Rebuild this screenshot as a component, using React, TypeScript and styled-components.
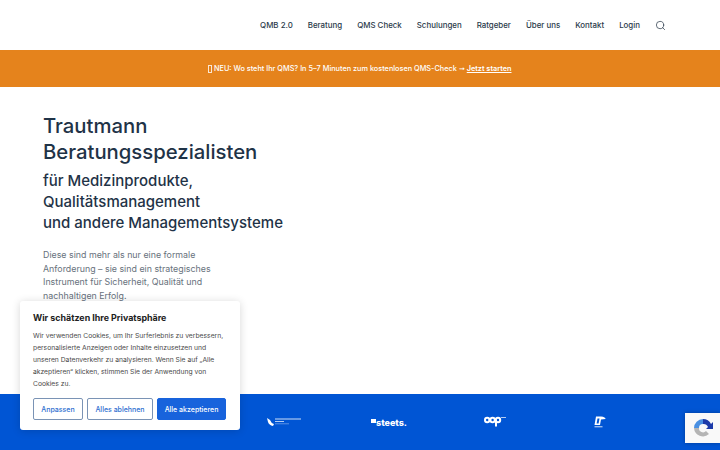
import React from 'react';
import styled, { createGlobalStyle } from 'styled-components';
import { Search } from 'lucide-react';

const GlobalStyle = createGlobalStyle`
  html, body {
    margin: 0;
    padding: 0;
    background: #fff;
  }
  * {
    box-sizing: border-box;
  }
`;

const Page = styled.div`
  position: relative;
  display: flex;
  flex-direction: column;
  width: 720px;
  height: 450px;
  overflow: hidden;
  font-family: Inter, 'Noto Sans', sans-serif;
`;

const Header = styled.header`
  display: flex;
  justify-content: flex-end;
  align-items: center;
  gap: 15px;
  height: 50px;
  padding-right: 54px;
  background: #fff;
`;

const NavLink = styled.a`
  font-size: 7.9px;
  font-weight: 500;
  color: #2a3a4a;
  white-space: nowrap;
`;

const SearchButton = styled.span`
  display: flex;
  color: #2a3a4a;
`;

const Banner = styled.div`
  display: flex;
  justify-content: center;
  align-items: center;
  height: 37px;
  background: #e5831c;
  color: #fff;
  font-size: 7.3px;
  font-weight: 500;
  white-space: nowrap;
`;

const MissingGlyph = styled.span`
  width: 4px;
  height: 8px;
  margin-right: 1.5px;
  border: 0.5px solid rgba(255, 255, 255, 0.8);
`;

const BannerLink = styled.a`
  margin-left: 2px;
  font-weight: 600;
  text-decoration: underline;
`;

const Hero = styled.main`
  flex: 1;
  padding: 26px 0 0 43px;
  background: #fff;
`;

const Title = styled.h1`
  margin: 0;
  font-size: 20.3px;
  font-weight: 500;
  line-height: 26px;
  color: #1f3347;
`;

const Subtitle = styled.h2`
  margin: 5px 0 0;
  font-size: 15px;
  font-weight: 500;
  line-height: 21px;
  color: #1f3347;
`;

const Intro = styled.p`
  margin: 15px 0 0;
  width: 172px;
  font-size: 8.85px;
  line-height: 13.6px;
  color: #68727d;
`;

const LogoStrip = styled.footer`
  display: grid;
  grid-template-columns: repeat(4, 105.5px);
  align-items: center;
  justify-items: center;
  height: 56px;
  padding-left: 231px;
  background: #0055d4;
  color: #fff;
`;

const SteetsLogo = styled.span`
  display: flex;
  align-items: center;
  font-size: 9px;
  font-weight: 800;
`;

const SteetsMark = styled.span`
  width: 4.5px;
  height: 4.5px;
  margin-bottom: 2px;
  background: #fff;
`;

const CookieCard = styled.section`
  position: absolute;
  left: 20px;
  top: 301px;
  width: 220px;
  height: 129px;
  padding: 10px 0 0 13px;
  background: #fff;
  border-radius: 3px;
  box-shadow: 0 1px 8px rgba(0, 0, 0, 0.16);
`;

const CookieTitle = styled.h3`
  margin: 0;
  font-size: 8.9px;
  font-weight: 700;
  line-height: 13px;
  color: #212121;
`;

const CookieText = styled.p`
  margin: 6px 0 0;
  width: 194px;
  font-size: 6.75px;
  line-height: 12px;
  color: #4a4a4a;
`;

const CookieActions = styled.div`
  display: flex;
  gap: 4px;
  margin-top: 8px;
`;

const CookieButton = styled.button<{ $primary?: boolean; $width: number }>`
  width: ${(p) => p.$width}px;
  height: 22px;
  padding: 0;
  font-family: inherit;
  font-size: 7px;
  font-weight: 500;
  border-radius: 2px;
  border: 1.5px solid ${(p) => (p.$primary ? '#1863dc' : '#7a93b5')};
  background: ${(p) => (p.$primary ? '#1863dc' : '#fff')};
  color: ${(p) => (p.$primary ? '#fff' : '#2f6fd0')};
`;

const RecaptchaBadge = styled.div`
  position: absolute;
  left: 685px;
  top: 413px;
  display: flex;
  align-items: center;
  padding-left: 7px;
  width: 35px;
  height: 30px;
  background: #f9f9f9;
  box-shadow: 0 0 4px rgba(0, 0, 0, 0.3);
`;

const navItems = [
  'QMB 2.0',
  'Beratung',
  'QMS Check',
  'Schulungen',
  'Ratgeber',
  'Über uns',
  'Kontakt',
  'Login',
];

const WaveLogo = () => (
  <svg width="36" height="10" viewBox="0 0 36 10" fill="#fff">
    <path d="M1 1 L4 3 Q5 6 8 7 L7 9 Q3 8 2 5 Z" />
    <rect x="9" y="1.5" width="26" height="1" opacity="0.8" />
    <rect x="9" y="4" width="9" height="1" opacity="0.7" />
    <rect x="9" y="6.5" width="14" height="0.7" opacity="0.5" />
  </svg>
);

const AapLogo = () => (
  <svg width="22" height="12" viewBox="0 0 22 12" fill="none" stroke="#fff">
    <circle cx="3.2" cy="4" r="2.2" strokeWidth="2" />
    <circle cx="8.6" cy="4" r="2.2" strokeWidth="2" />
    <circle cx="14" cy="4" r="2.2" strokeWidth="2" />
    <path d="M12 4 V10.5" strokeWidth="2" />
    <path d="M17 1.5 H22" strokeWidth="0.7" />
  </svg>
);

const ShieldLogo = () => (
  <svg width="12" height="13" viewBox="0 0 12 13" fill="#fff">
    <path fillRule="evenodd" d="M2 0.5 H7 Q11.5 1 11.5 3 L7 3.5 L6 9 H0.5 Z M3.5 2.5 L2.6 7.5 H4.6 L5.5 2.5 Z" />
    <rect x="0.5" y="10" width="8" height="1.4" opacity="0.6" />
  </svg>
);

const RecaptchaIcon = () => (
  <svg width="22" height="22" viewBox="0 0 22 22" fill="none">
    <path d="M2 11 A9 9 0 0 1 11 2 L11 7 A4 4 0 0 0 7 11 Z" fill="#4a90e2" />
    <path d="M11 2 A9 9 0 0 1 19 7 L21 5 L21 12 L14 12 L16 10 A5 5 0 0 0 11 7 Z" fill="#1c3aa9" />
    <path d="M2 11 H7 A4 4 0 0 0 14 14 L17 17 A9 9 0 0 1 2 11 Z" fill="#b5b5b5" />
  </svg>
);

const App = () => {
  return (
    <Page>
      <GlobalStyle />
      <Header>
        {navItems.map((item) => (
          <NavLink key={item}>{item}</NavLink>
        ))}
        <SearchButton>
          <Search size={11} strokeWidth={1.6} />
        </SearchButton>
      </Header>
      <Banner>
        <MissingGlyph />
        NEU: Wo steht Ihr QMS? In 5–7 Minuten zum kostenlosen QMS-Check ➞
        <BannerLink>Jetzt starten</BannerLink>
      </Banner>
      <Hero>
        <Title>
          Trautmann
          <br />
          Beratungsspezialisten
        </Title>
        <Subtitle>
          für Medizinprodukte,
          <br />
          Qualitätsmanagement
          <br />
          und andere Managementsysteme
        </Subtitle>
        <Intro>
          Diese sind mehr als nur eine formale Anforderung – sie sind ein
          strategisches Instrument für Sicherheit, Qualität und nachhaltigen
          Erfolg.
        </Intro>
      </Hero>
      <LogoStrip>
        <WaveLogo />
        <SteetsLogo>
          <SteetsMark />
          steets.
        </SteetsLogo>
        <AapLogo />
        <ShieldLogo />
      </LogoStrip>
      <CookieCard>
        <CookieTitle>Wir schätzen Ihre Privatsphäre</CookieTitle>
        <CookieText>
          Wir verwenden Cookies, um Ihr Surferlebnis zu verbessern,
          personalisierte Anzeigen oder Inhalte einzusetzen und unseren
          Datenverkehr zu analysieren. Wenn Sie auf „Alle akzeptieren“ klicken,
          stimmen Sie der Anwendung von Cookies zu.
        </CookieText>
        <CookieActions>
          <CookieButton $width={50}>Anpassen</CookieButton>
          <CookieButton $width={66}>Alles ablehnen</CookieButton>
          <CookieButton $width={69} $primary>
            Alle akzeptieren
          </CookieButton>
        </CookieActions>
      </CookieCard>
      <RecaptchaBadge>
        <RecaptchaIcon />
      </RecaptchaBadge>
    </Page>
  );
};

export default App;
